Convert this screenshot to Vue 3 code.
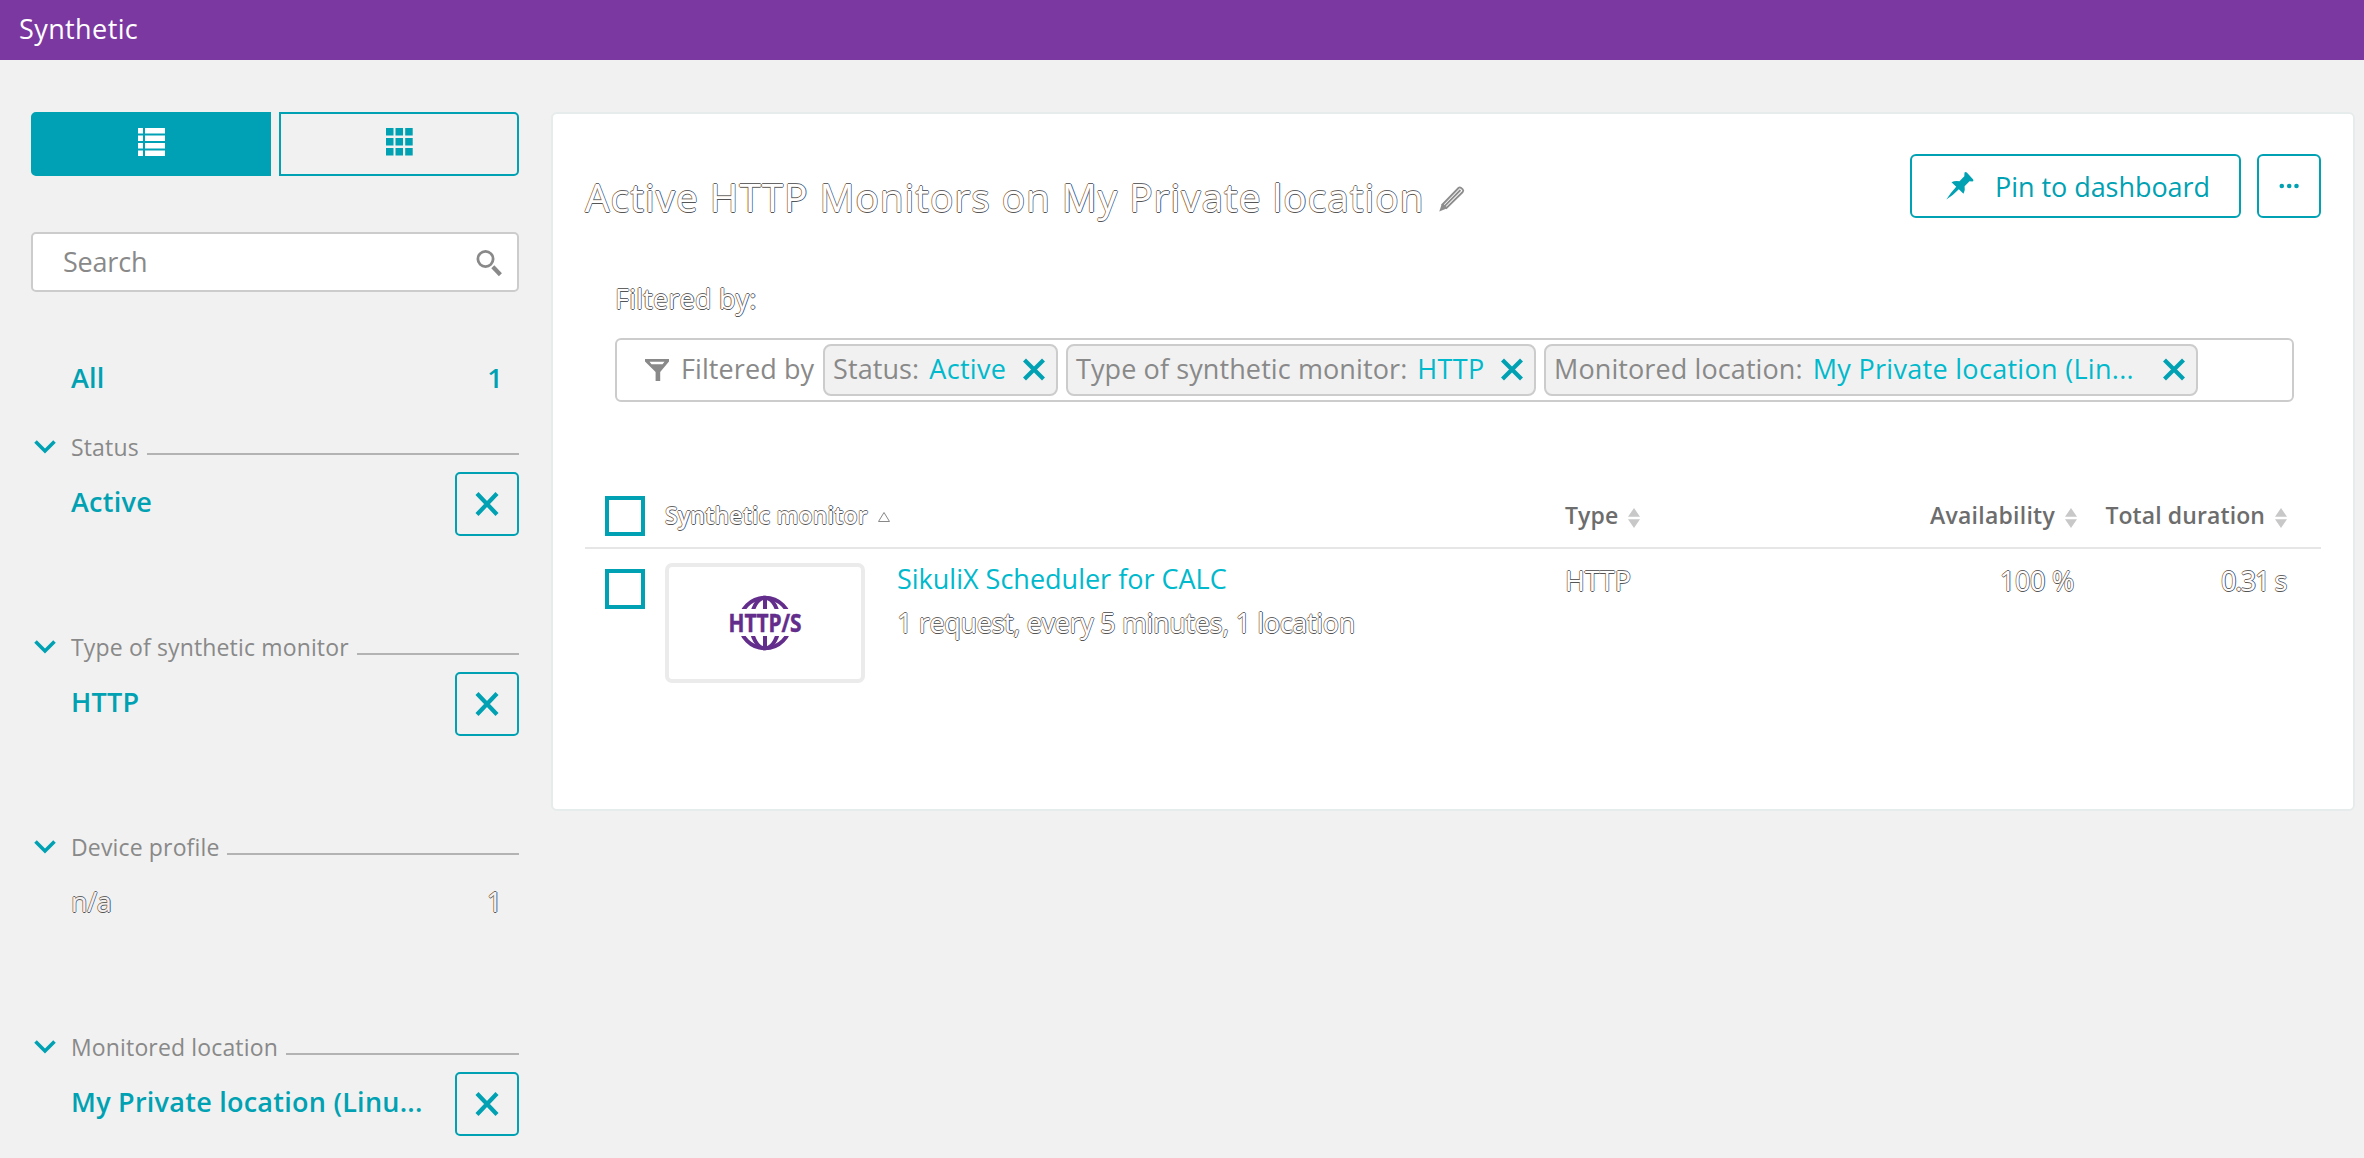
<script setup>
const sections = [
  { key: 'status', title: 'Status', value: 'Active', removable: true },
  { key: 'type', title: 'Type of synthetic monitor', value: 'HTTP', removable: true },
  { key: 'device', title: 'Device profile', value: 'n/a', count: 1 },
  { key: 'location', title: 'Monitored location', value: 'My Private location (Linu...', removable: true },
]

const chips = [
  { key: 'status', label: 'Status:', value: 'Active' },
  { key: 'type', label: 'Type of synthetic monitor:', value: 'HTTP' },
  { key: 'location', label: 'Monitored location:', value: 'My Private location (Lin...' },
]
</script>

<template>
  <div class="page">
    <header class="topbar">Synthetic</header>
    <div class="body">
      <aside class="sidebar">
        <div class="toggle">
          <button class="toggle-btn active" aria-label="List view">
            <svg width="27" height="28" viewBox="0 0 27 28" fill="currentColor">
              <path d="M0 0h5v5.5H0zM7 0h20v5.5H7zM0 7.5h5V13H0zM7 7.5h20V13H7zM0 15h5v5.500H0zM7 15h20v5.500H7zM0 22.500h5V28H0zM7 22.500h20V28H7z" />
            </svg>
          </button>
          <button class="toggle-btn" aria-label="Tile view">
            <svg width="27" height="28" viewBox="0 0 27 28" fill="currentColor">
              <path d="M0 0h7.500v7.500H0zM9.500 0H17v7.500H9.500zM19.200 0h7.500v7.500h-7.500zM0 10h7.500v7.500H0zM9.500 10H17v7.500H9.500zM19.200 10h7.500v7.500h-7.500zM0 20h7.500v7.500H0zM9.500 20H17v7.500H9.500zM19.200 20h7.500v7.500h-7.500z" />
            </svg>
          </button>
        </div>

        <div class="search">
          <span>Search</span>
          <svg width="28" height="28" viewBox="0 0 28 28" fill="none" stroke="#898989">
            <circle cx="10.500" cy="11" r="7.600" stroke-width="2.800" />
            <path d="M17.800 18.800l7.600 7.900" stroke-width="4.200" />
          </svg>
        </div>

        <div class="all-row"><span>All</span><span>1</span></div>

        <section v-for="s in sections" :key="s.key" class="facet">
          <div class="facet-head">
            <svg width="22" height="14" viewBox="0 0 22 14" fill="none" stroke="#00a1b2" stroke-width="3.600">
              <path d="M1.500 1.500L11 11l9.500-9.500" />
            </svg>
            <span class="facet-title">{{ s.title }}</span>
            <i class="rule"></i>
          </div>
          <div class="facet-row" :class="{ plain: !s.removable }">
            <span class="facet-value" :class="{ hollow: !s.removable }">{{ s.value }}</span>
            <button v-if="s.removable" class="remove" aria-label="Remove">
              <svg width="24" height="24" viewBox="0 0 24 24" fill="none" stroke="currentColor" stroke-width="4.200">
                <path d="M2 1.500l20 21M22 1.500l-20 21" />
              </svg>
            </button>
            <span v-else class="count hollow">{{ s.count }}</span>
          </div>
        </section>
      </aside>

      <main class="card">
        <div class="card-head">
          <h1 class="hollow">Active HTTP Monitors on My Private location</h1>
          <svg class="pencil" width="26" height="26" viewBox="0 0 26 26" fill="none" stroke="#8d8d8d" stroke-width="1.800">
            <path d="M3.500 18.500L19.500 2q1.200-1.200 2.600 0l1.600 1.400q1.200 1.300 0 2.600L7.500 22zM5.600 20.200L21.500 4" />
            <path d="M.3 25.600l2.400-7.600 5 4.600z" fill="#8d8d8d" stroke="none" />
          </svg>
          <div class="actions">
            <button class="pin">
              <svg width="28" height="28" viewBox="0 0 28 28" fill="currentColor">
                <path d="M18.500 0.500Q20-.5 21 .8L27.200 7.500Q28 9 26.500 9.400L23.500 9.200 18.600 14.200Q19.500 18.500 17.500 21.700L12.800 17.300Q6.500 24 .3 27.600 4 21.500 10.200 14.800L5.500 10.300Q9 8.200 13.500 9.200L18.300 4.300z" />
              </svg>
              <span>Pin to dashboard</span>
            </button>
            <button class="more" aria-label="More">
              <svg width="20" height="6" viewBox="0 0 20 6" fill="currentColor">
                <circle cx="2.800" cy="3" r="2.300" /><circle cx="10.200" cy="3" r="2.300" /><circle cx="17.500" cy="3" r="2.300" />
              </svg>
            </button>
          </div>
        </div>

        <div class="filter-label hollow">Filtered by:</div>
        <div class="filter-box">
          <svg width="24" height="22" viewBox="0 0 24 22">
            <path fill="#898989" fill-rule="evenodd" d="M0 0h24v2.500l-8.800 10.500V22h-4.600v-9L0 2.500zM4.500 2.800l2 2.500h11l2-2.500z" />
          </svg>
          <span class="by">Filtered by</span>
          <div v-for="c in chips" :key="c.key" class="chip" :class="'c-' + c.key">
            <span class="chip-label">{{ c.label }}</span>
            <span class="chip-value">{{ c.value }}</span>
            <svg width="22" height="21" viewBox="0 0 22 21" fill="none" stroke="#00a1b2" stroke-width="4.200">
              <path d="M1.500 1l19 19M20.500 1l-19 19" />
            </svg>
          </div>
        </div>

        <div class="grid-row head">
          <i class="check"></i>
          <div class="c-name"><span class="hollow">Synthetic monitor</span>
            <svg width="14" height="12" viewBox="0 0 14 12" fill="none" stroke="#888" stroke-width="1"><path d="M7 1.500L12.500 10.500h-11z" /></svg>
          </div>
          <div class="c-kind"><span>Type</span><svg class="sort" width="12" height="20" viewBox="0 0 12 20"><path d="M6 0l6 8.800H0zM0 11.200h12L6 20z" fill="#c8c8c8" /></svg></div>
          <div class="c-avail"><span>Availability</span><svg class="sort" width="12" height="20" viewBox="0 0 12 20"><path d="M6 0l6 8.800H0zM0 11.200h12L6 20z" fill="#c8c8c8" /></svg></div>
          <div class="c-total"><span>Total duration</span><svg class="sort" width="12" height="20" viewBox="0 0 12 20"><path d="M6 0l6 8.800H0zM0 11.200h12L6 20z" fill="#c8c8c8" /></svg></div>
        </div>
        <div class="grid-row item">
          <i class="check"></i>
          <div class="thumb">
            <svg width="76" height="56" viewBox="0 0 76 56">
              <defs><clipPath id="caps"><path d="M0 0h76v14H0zM0 41h76v15H0z" /></clipPath></defs>
              <g clip-path="url(#caps)" fill="none" stroke="#632d8c" stroke-width="4">
                <circle cx="38" cy="28" r="25.300" />
                <ellipse cx="38" cy="28" rx="14" ry="25.300" />
                <path d="M38 2v52" />
              </g>
              <text x="1.500" y="36.500" textLength="73" lengthAdjust="spacingAndGlyphs" class="proto">HTTP/S</text>
            </svg>
          </div>
          <div class="c-desc">
            <a class="link">SikuliX Scheduler for CALC</a>
            <p class="hollow">1 request, every 5 minutes, 1 location</p>
          </div>
          <div class="c-kind hollow">HTTP</div>
          <div class="c-avail hollow">100 %</div>
          <div class="c-total hollow">0.31 s</div>
        </div>
      </main>
    </div>
  </div>
</template>

<style>
body { margin: 0; background: #f1f1f1; }
</style>

<style scoped>
* { box-sizing: border-box; }
.page { height: 1158px; overflow: hidden; background: #f1f1f1; color: #898989; font: 27px/40px "Open Sans", "Noto Sans", sans-serif; letter-spacing: 0.2px; }
button { font: inherit; letter-spacing: inherit; padding: 0; margin: 0; color: #00a1b2; background: transparent; border: 2px solid #00a1b2; display: flex; align-items: center; justify-content: center; }
svg { display: block; flex: none; overflow: visible; }
span, a, p, h1 { white-space: nowrap; }

.topbar { height: 60px; padding: 9px 0 0 19px; background: #7c38a1; color: #fff; letter-spacing: 0.4px; }
.body { display: flex; align-items: flex-start; padding: 52px 9px 0 31px; gap: 32px; }

.sidebar { width: 488px; flex: none; }
.toggle { display: flex; gap: 8px; }
.toggle-btn { width: 240px; height: 64px; padding-bottom: 4px; border-radius: 0 5px 5px 0; }
.toggle-btn.active { background: #00a1b5; color: #fff; border-radius: 5px 0 0 5px; }
.search { display: flex; align-items: center; justify-content: space-between; height: 60px; margin-top: 56px; padding: 0 14px 1px 30px; background: #fff; border: 2px solid #ccc; border-radius: 5px; letter-spacing: -0.2px; }
.all-row { display: flex; justify-content: space-between; height: 40px; margin-top: 66px; padding: 0 16px 0 40px; color: #00a1b2; font-weight: 600; }

.facet { height: 200px; }
.all-row + .facet { margin-top: 29px; }
.facet-head { display: flex; align-items: center; height: 40px; font-size: 23px; letter-spacing: 0.15px; }
.facet-head svg { margin: 0 15px 0 3px; }
.rule { flex: 1; height: 2px; margin: 14px 0 0 8px; background: #b3b3b3; }
.facet-row { display: flex; justify-content: space-between; padding-left: 40px; margin-top: 5px; color: #00a1b2; font-weight: 600; letter-spacing: 0.25px; }
.facet-value, .count { margin-top: 10px; }
.facet-row.plain { font-weight: 400; padding-right: 17px; letter-spacing: -0.3px; }
.remove { width: 64px; height: 64px; border-radius: 5px; }

/* outlined text: background-coloured glyphs with thin tinted edges */
.hollow { color: #fff; text-shadow: -0.8px 0 #b0702c, 0.8px 0 #3468a8, 0 0.6px #555, 0 -0.6px #666; }
.sidebar .hollow { color: #f1f1f1; }

.card { flex: 1; height: 699px; padding: 40px 32px 0 32px; background: #fff; border: 2px solid #e6ebeb; border-radius: 6px; }
.card-head { display: flex; height: 64px; }
h1 { margin: 13px 0 0; font-size: 39px; font-weight: 400; line-height: 60px; letter-spacing: 0.88px; }
.pencil { margin: 32px 0 0 15px; }
.actions { display: flex; gap: 16px; margin-left: auto; }
.pin { width: 331px; height: 64px; padding-left: 5px; border-radius: 6px; gap: 21px; letter-spacing: -0.05px; }
.pin span { padding-top: 2px; }
.more { width: 64px; height: 64px; border-radius: 6px; }
.filter-label { margin: 61px 0 0 30px; height: 59px; }
.filter-box { display: flex; align-items: center; height: 64px; width: 1679px; margin-left: 30px; padding-left: 28px; border: 2px solid #ccc; border-radius: 6px; }
.by { margin: 0 9px 2px 12px; width: 133px; letter-spacing: 0.1px; }
.chip { display: flex; align-items: center; height: 52px; margin-right: 8px; padding: 0 11px 2px 8px; background: #f1f1f1; border: 2px solid #ccc; border-radius: 8px; }
.c-status { width: 235px; }
.c-type { width: 470px; }
.c-location { width: 654px; }
.chip-label { letter-spacing: 0.1px; }
.chip-value { margin-left: 10px; color: #00b9cc; letter-spacing: 0.3px; }
.chip svg { margin-left: auto; }

.grid-row { display: flex; }
.check { width: 40px; height: 40px; flex: none; margin-left: 20px; border: 4px solid #00a1b2; }
.head { height: 53px; margin-top: 94px; border-bottom: 2px solid #e6e6e6; font-size: 23px; font-weight: 600; color: #6d6d6d; }
.head > div { display: flex; align-items: center; height: 38px; letter-spacing: 0.1px; }
.c-name { width: 900px; margin-left: 20px; }
.c-name .hollow { letter-spacing: 0.2px; }
.c-name svg { margin: 4px 0 0 9px; }
.c-kind { width: 301px; }
.c-avail { width: 211px; justify-content: flex-end; text-align: right; }
.c-total { width: 210px; justify-content: flex-end; text-align: right; }
.head > .c-avail { letter-spacing: 0.25px; }
.sort { margin: 6px 0 0 10px; }
.item .check { margin-top: 20px; }
.thumb { display: flex; align-items: center; justify-content: center; width: 200px; height: 120px; margin: 14px 0 0 20px; border: 4px solid #ebebeb; border-radius: 7px; }
.proto { font: 700 25px "Open Sans", sans-serif; letter-spacing: 0; fill: #632d8c; stroke: #632d8c; stroke-width: 0.5px; }
.c-desc { width: 668px; margin: 10px 0 0 32px; }
.link { color: #00b9cc; letter-spacing: 0; }
.c-desc p { margin: 4px 0 0; letter-spacing: -0.33px; }
.item > .c-kind, .item > .c-avail, .item > .c-total { margin-top: 12px; letter-spacing: 0; }
.item > .c-avail { padding-right: 3px; letter-spacing: -0.3px; }
.item > .c-total { padding-right: 1px; letter-spacing: -1.4px; }
</style>
